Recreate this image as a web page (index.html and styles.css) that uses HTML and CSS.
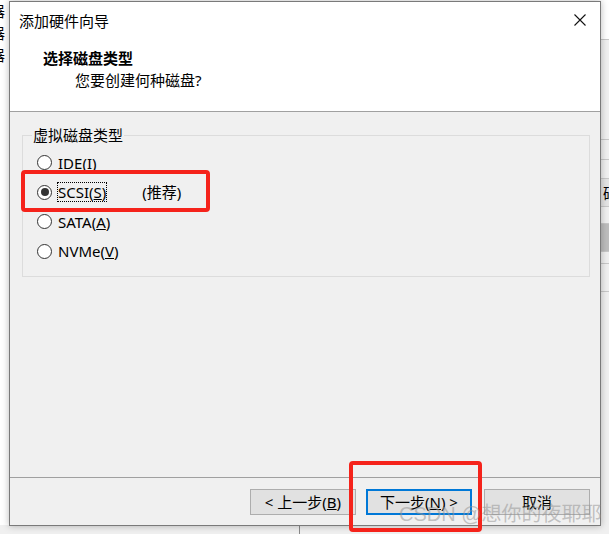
FILE: index.html
```html
<!DOCTYPE html>
<html lang="zh-CN">
<head>
    <meta charset="UTF-8">
    <meta name="viewport" content="width=device-width, initial-scale=1.0">
    <title>添加硬件向导</title>
    <link rel="stylesheet" href="styles.css">
</head>
<body>
    <div class="desktop">
        <div class="bgLeft">
            <span>器</span>
            <span>器</span>
            <span>器</span>
        </div>
        <div class="bgMid"></div>
        <div class="bgRight">
            <div class="row white"></div>
            <div class="row" style="height:100px"></div>
            <div class="row" style="height:20px"></div>
            <div class="row" style="height:19px"></div>
            <div class="row cell" style="height:28px">础</div>
            <div class="row" style="height:17px"></div>
            <div class="row dark" style="height:28px"></div>
            <div class="row" style="height:12px"></div>
            <div class="row" style="height:28px"></div>
            <div class="row" style="height:240px"></div>
        </div>
        <div class="bgBottom">
            <div class="bgLine"></div>
        </div>
    </div>

    <div class="dialog">
        <div class="titlebar">
            <span class="title">添加硬件向导</span>
            <svg class="close" width="12" height="12" viewBox="0 0 12 12">
                <path d="M0.5 0.5 L11.5 11.5 M11.5 0.5 L0.5 11.5" stroke="#111" stroke-width="1.1" fill="none"/>
            </svg>
        </div>
        <div class="header">
            <div class="heading">选择磁盘类型</div>
            <div class="subheading">您要创建何种磁盘?</div>
        </div>
        <div class="content">
            <fieldset class="group">
                <legend>虚拟磁盘类型</legend>
                <div class="opt"><span class="radio"></span>IDE(<u>I</u>)</div>
                <div class="opt"><span class="radio checked"></span><span class="focus">SCSI(<u>S</u>)</span><span class="hint">(推荐)</span></div>
                <div class="opt"><span class="radio"></span>SATA(<u>A</u>)</div>
                <div class="opt"><span class="radio"></span>NVMe(<u>V</u>)</div>
            </fieldset>
        </div>
        <div class="footer">
            <button class="btn">&lt; 上一步(<u>B</u>)</button>
            <button class="btn default">下一步(<u>N</u>) &gt;</button>
            <button class="btn cancel">取消</button>
        </div>
    </div>

    <div class="mark markScsi"></div>
    <div class="mark markNext"></div>
    <div class="watermark">CSDN @想你的夜耶耶</div>
</body>
</html>
```

FILE: styles.css
```css
*{
    box-sizing: border-box;
}
body{
    margin: 0;
    width: 609px;
    height: 534px;
    overflow: hidden;
    position: relative;
    background: #f0f0f0;
    font-family: "Noto Sans", "Noto Sans CJK SC", sans-serif;
    font-size: 15px;
    color: #000;
}
.desktop{
    display: grid;
    grid-template-columns: 9px 1fr 8px;
    grid-template-rows: 1fr 9px;
    height: 534px;
}
.bgLeft{
    background: #fff;
    display: flex;
    flex-direction: column;
    gap: 4px;
    padding-top: 2px;
    overflow: hidden;
    font-family: "Noto Sans CJK SC", sans-serif;
    font-size: 15px;
    line-height: 18px;
}
.bgLeft span{
    margin-left: -10px;
}
.bgMid{
    background: #fff;
}
.bgRight{
    background: #f0f0f0;
    display: flex;
    flex-direction: column;
    overflow: hidden;
}
.bgRight .row{
    border-bottom: 1px solid #c8c8c8;
    flex: none;
}
.bgRight .white{
    height: 40px;
    background: #fff;
}
.bgRight .cell{
    background: #e4e4e4;
    font-family: "Noto Sans CJK SC", sans-serif;
    font-size: 15px;
    line-height: 28px;
    padding-left: 2px;
}
.bgRight .dark{
    background: #bdbdbd;
}
.bgBottom{
    grid-column: 1 / 4;
    background: #f0f0f0;
    position: relative;
}
.bgLine{
    margin-left: 299px;
    width: 1px;
    height: 100%;
    background: #8a8a8a;
}

/* the wizard window */
.dialog{
    position: absolute;
    left: 9px;
    top: 1px;
    width: 592px;
    height: 525px;
    border: 1px solid #7a7a7a;
    background: #f0f0f0;
    box-shadow: 0 0 7px rgba(0,0,0,0.28);
    display: flex;
    flex-direction: column;
}
.titlebar{
    height: 37px;
    flex: none;
    background: #fff;
    display: flex;
    align-items: center;
    justify-content: space-between;
    padding: 0 14px 0 9px;
}
.title{
    line-height: 20px;
}
.close{
    margin-top: -1px;
}
.header{
    height: 73px;
    flex: none;
    background: #fff;
    border-bottom: 1px solid #a0a0a0;
    padding: 10px 0 0 33px;
    line-height: 18px;
}
.heading{
    font-weight: bold;
}
.subheading{
    margin: 4px 0 0 32px;
}
.content{
    flex: 1;
    padding: 14px 10px 0 12px;
}
.group{
    margin: 0;
    padding: 4px 0 0 14px;
    height: 151px;
    border: 1px solid #dcdcdc;
}
.group legend{
    padding: 0 1px;
    margin-left: -5px;
    line-height: 18px;
}
.opt{
    height: 29.5px;
    display: flex;
    align-items: center;
    line-height: 18px;
}
.radio{
    width: 15px;
    height: 15px;
    border: 1px solid #333;
    border-radius: 50%;
    background: #fff;
    margin-right: 6px;
    display: flex;
    align-items: center;
    justify-content: center;
}
.radio.checked::after{
    content: "";
    width: 8px;
    height: 8px;
    border-radius: 50%;
    background: #333;
}
.focus{
    outline: 1px dotted #000;
    outline-offset: 0;
}
.hint{
    margin-left: 36px;
}
.footer{
    height: 48px;
    flex: none;
    border-top: 1px solid #a0a0a0;
    display: flex;
    justify-content: flex-end;
    align-items: flex-start;
    padding: 11px 10px 0 0;
    gap: 10px;
}
.btn{
    width: 106px;
    height: 26px;
    border: 1px solid #adadad;
    background: #e1e1e1;
    font-family: inherit;
    font-size: 15px;
    line-height: 18px;
    padding: 0;
    color: #000;
}
.btn.default{
    border: 2px solid #0078d7;
}
.btn.cancel{
    margin-left: 2px;
}

/* annotations drawn over the screenshot */
.mark{
    position: absolute;
    border: 4px solid #f5231b;
    border-radius: 4px;
}
.markScsi{
    left: 21px;
    top: 170px;
    width: 189px;
    height: 42px;
}
.markNext{
    left: 349px;
    top: 461px;
    width: 133px;
    height: 71px;
}
.watermark{
    position: absolute;
    left: 399px;
    top: 502px;
    font-family: "Liberation Sans", "Noto Sans CJK SC", sans-serif;
    font-size: 20px;
    line-height: 24px;
    color: rgba(150,150,150,0.55);
    white-space: nowrap;
}
```
